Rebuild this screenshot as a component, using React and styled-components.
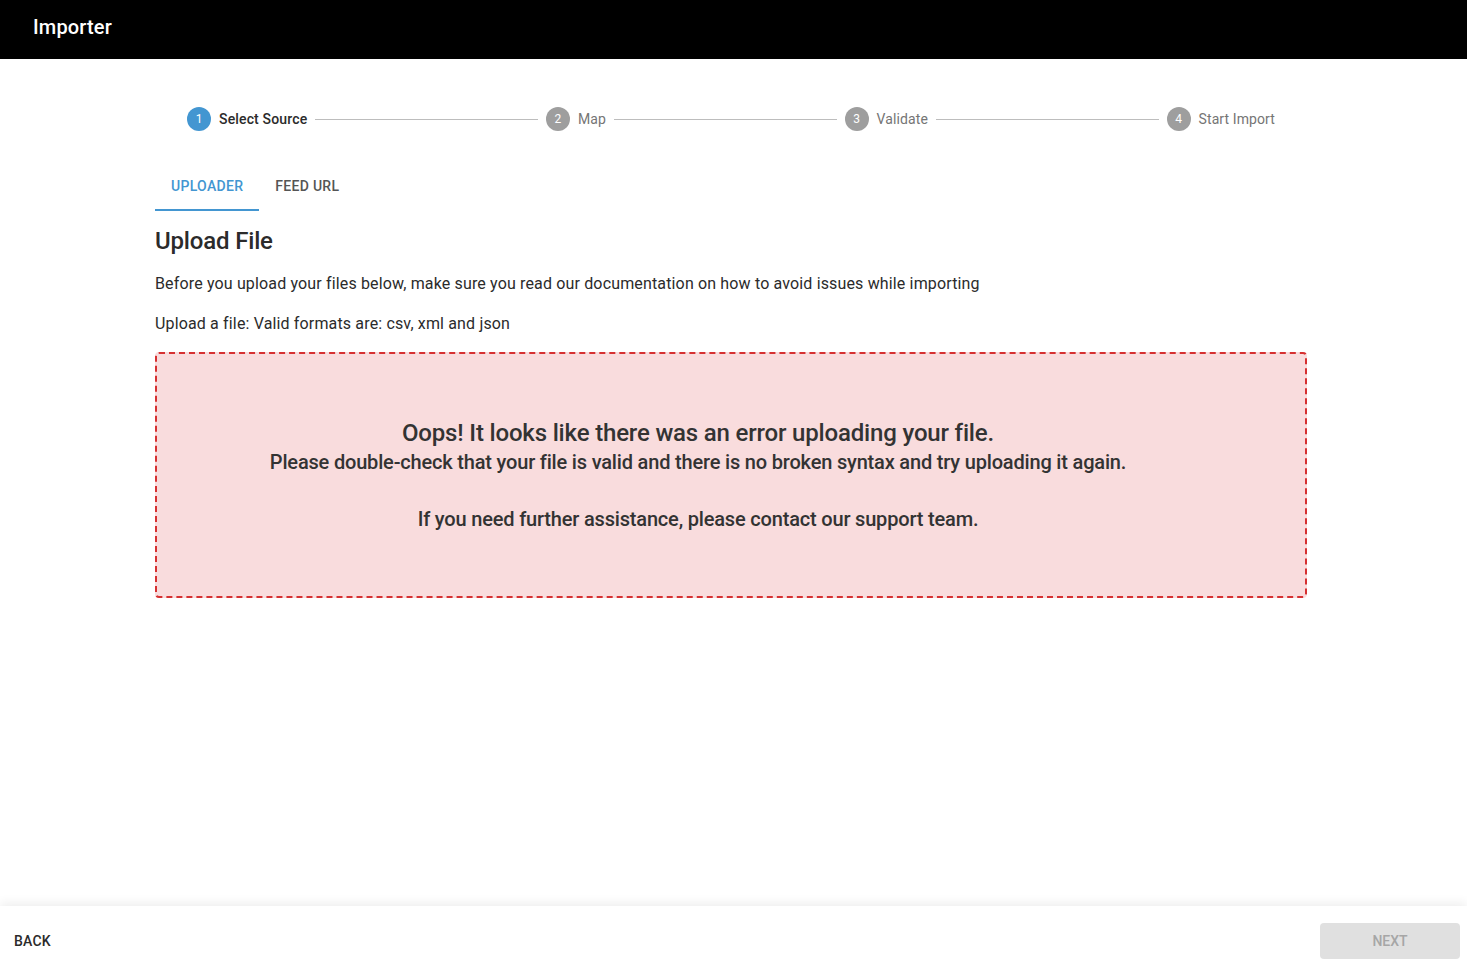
import React, { useState } from "react";
import styled, { createGlobalStyle } from "styled-components";

const GlobalStyle = createGlobalStyle`
  html, body { margin: 0; padding: 0; height: 100%; }
  body { font-family: Roboto, "Liberation Sans", Arial, sans-serif; background: #fff; color: #333; }
  #root { height: 100%; }
  * { box-sizing: border-box; }
`;

const BLUE = "#4396d1";

const Page = styled.div`
  display: flex;
  flex-direction: column;
  height: 975px;
`;

const Header = styled.header`
  height: 59px;
  background: #000;
  display: flex;
  align-items: center;
  padding: 0 33px;
  flex-shrink: 0;
`;

const Title = styled.h1`
  margin: 0;
  color: #fff;
  font-size: 20px;
  font-weight: 500;
  letter-spacing: 0.15px;
  line-height: 1;
  padding-bottom: 6px;
`;

const Main = styled.main`
  flex: 1;
  width: 1152px;
  margin-left: 155px;
  padding-top: 24px;
`;

const Stepper = styled.div`
  display: flex;
  align-items: center;
  padding: 24px;
`;

const Step = styled.div`
  display: flex;
  align-items: center;
  gap: 8px;
  padding: 0 8px;
`;

const StepIcon = styled.span`
  width: 24px;
  height: 24px;
  border-radius: 50%;
  background: ${(p) => (p.$active ? BLUE : "#9e9e9e")};
  color: #fff;
  font-size: 12px;
  display: flex;
  align-items: center;
  justify-content: center;
`;

const StepLabel = styled.span`
  font-size: 14px;
  font-weight: ${(p) => (p.$active ? 500 : 400)};
  letter-spacing: ${(p) => (p.$active ? "0.15px" : "0.1px")};
  color: ${(p) => (p.$active ? "#2b2b2b" : "#757575")};
`;

const Connector = styled.span`
  flex: 1;
  border-top: 1px solid #bdbdbd;
`;

const Tabs = styled.div`
  display: flex;
  margin-top: 8px;
`;

const Tab = styled.button`
  height: 48px;
  padding: 0 16px;
  border: none;
  background: none;
  font-family: inherit;
  font-size: 14px;
  font-weight: 500;
  text-transform: uppercase;
  letter-spacing: 0.3px;
  color: ${(p) => (p.$active ? BLUE : "#555")};
  border-bottom: 2px solid ${(p) => (p.$active ? BLUE : "transparent")};
  cursor: pointer;
`;

const Heading = styled.h2`
  margin: 14px 0 0;
  font-size: 24px;
  font-weight: 500;
  letter-spacing: -0.17px;
  line-height: 32px;
  color: #2b2b2b;
`;

const Text = styled.p`
  margin: ${(p) => p.$mt || "14px"} 0 0;
  font-size: 16px;
  line-height: 24px;
  letter-spacing: 0.15px;
  color: #2b2b2b;
`;

const ErrorBox = styled.div`
  margin-top: 16px;
  height: 246px;
  padding-right: 66px;
  border: 2px dashed #d63031;
  border-radius: 4px;
  background: #f9dcdd;
  display: flex;
  flex-direction: column;
  align-items: center;
  justify-content: center;
  text-align: center;
  color: #333;
`;

const ErrorTitle = styled.div`
  font-size: 24px;
  font-weight: 500;
  letter-spacing: -0.17px;
  line-height: 30px;
`;

const ErrorLine = styled.div`
  font-size: 20px;
  font-weight: 500;
  letter-spacing: -0.18px;
  line-height: 28px;
  margin-top: ${(p) => p.$mt || "0"};
`;

const Footer = styled.footer`
  height: 69px;
  flex-shrink: 0;
  display: flex;
  align-items: center;
  justify-content: space-between;
  padding: 0 7px;
  background: #fff;
  box-shadow: 0 -3px 10px rgba(0, 0, 0, 0.07);
`;

const TextButton = styled.button`
  border: none;
  background: none;
  font-family: inherit;
  font-size: 14px;
  font-weight: 500;
  letter-spacing: 0.2px;
  color: #2b2b2b;
  text-transform: uppercase;
  padding: 8px 7px;
  cursor: pointer;
`;

const FilledButton = styled.button`
  width: 140px;
  height: 36px;
  border: none;
  border-radius: 4px;
  background: #e0e0e0;
  color: #a6a6a6;
  font-family: inherit;
  font-size: 14px;
  font-weight: 500;
  text-transform: uppercase;
`;

const steps = ["Select Source", "Map", "Validate", "Start Import"];

export default function App() {
  const [tab, setTab] = useState(0);
  return (
    <>
      <GlobalStyle />
      <Page>
        <Header>
          <Title>Importer</Title>
        </Header>
        <Main>
          <Stepper>
            {steps.map((s, i) => (
              <React.Fragment key={s}>
                {i > 0 && <Connector />}
                <Step>
                  <StepIcon $active={i === 0}>{i + 1}</StepIcon>
                  <StepLabel $active={i === 0}>{s}</StepLabel>
                </Step>
              </React.Fragment>
            ))}
          </Stepper>
          <Tabs>
            <Tab $active={tab === 0} onClick={() => setTab(0)}>Uploader</Tab>
            <Tab $active={tab === 1} onClick={() => setTab(1)}>Feed URL</Tab>
          </Tabs>
          <Heading>Upload File</Heading>
          <Text $mt="15px">
            Before you upload your files below, make sure you read our documentation on how to avoid issues while importing
          </Text>
          <Text $mt="16px">Upload a file: Valid formats are: csv, xml and json</Text>
          <ErrorBox>
            <ErrorTitle>Oops! It looks like there was an error uploading your file.</ErrorTitle>
            <ErrorLine>
              Please double-check that your file is valid and there is no broken syntax and try uploading it again.
            </ErrorLine>
            <ErrorLine $mt="29px">If you need further assistance, please contact our support team.</ErrorLine>
          </ErrorBox>
        </Main>
        <Footer>
          <TextButton>Back</TextButton>
          <FilledButton disabled>Next</FilledButton>
        </Footer>
      </Page>
    </>
  );
}
